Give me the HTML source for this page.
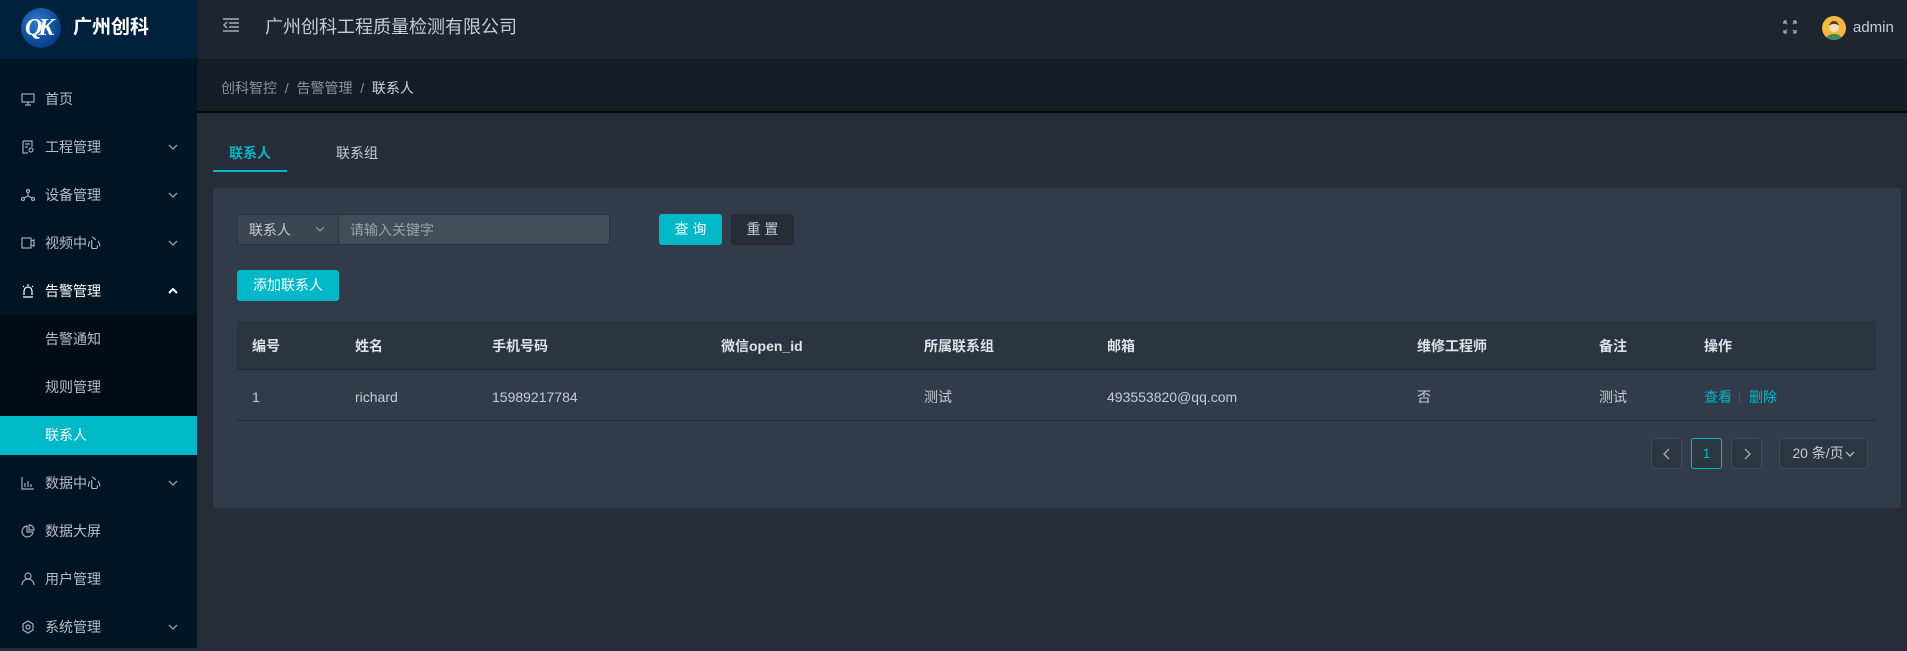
<!DOCTYPE html>
<html><head><meta charset="utf-8"><style>
*{margin:0;padding:0;box-sizing:border-box}
body{width:1907px;height:648px;overflow:hidden;background:#262d38;font-family:"Liberation Sans","Noto Sans CJK SC",sans-serif;font-size:14px;line-height:20px;color:#c8ccd2;position:relative}
.a{position:absolute;line-height:20px}
.side{left:0;top:0;width:197px;height:648px;background:#001524}
.logo{left:0;top:0;width:197px;height:59px;background:#00203b}
.mi{position:absolute;left:0;width:197px;height:48px;line-height:48px;color:#b8bec6;font-size:14px}
.mi .t{position:absolute;left:45px}
.mi svg.i{position:absolute;left:21px;top:17px}
.mi svg.ar{position:absolute;left:168px;top:21px}
.hdr{left:197px;top:0;width:1710px;height:59px;background:#1f252e}
.bc{left:197px;top:59px;width:1710px;height:54px;background:#181d25;border-bottom:2px solid #06090c}
.card{left:213px;top:188px;width:1688px;height:320px;background:#313b49;border-radius:3px}
.th{font-weight:bold;color:#dfe2e6}
.btn{position:absolute;border-radius:3px;text-align:center;font-size:14px}
.pg{position:absolute;top:438px;height:31px;border:1px solid #404a58;border-radius:3px;text-align:center;line-height:29px;color:#aab;background:#2c3542}
</style></head><body>
<div class="a side"></div>
<div class="a logo">
 <div class="a" style="left:21px;top:8px;width:40px;height:40px;border-radius:50%;background:radial-gradient(circle at 40% 35%,#2a7fd0,#0a3f86 70%,#082d60)"></div>
 <div class="a" style="left:25px;top:15px;color:#fff;font:italic bold 24px 'Liberation Serif',serif;letter-spacing:-4px;line-height:26px">QK</div>
 <div class="a" style="left:73px;top:16px;color:#fff;font-size:19px;font-weight:bold;line-height:24px">广州创科</div>
</div>
<div class="mi" style="top:75px"><svg class="i" width="14" height="14" viewBox="0 0 14 14" fill="none" stroke="#aab" stroke-width="1.2"><rect x="1" y="2" width="12" height="8"/><path d="M7 10v3M4 13h6"/></svg><span class="t">首页</span></div>
<div class="mi" style="top:123px"><svg class="i" width="14" height="14" viewBox="0 0 14 14" fill="none" stroke="#aab" stroke-width="1.2"><path d="M2 1h9v6M2 1v12h5M4 4h5M4 7h3"/><circle cx="10" cy="10" r="2"/></svg><span class="t">工程管理</span><svg class="ar" width="10" height="6" viewBox="0 0 10 6" fill="none" stroke="#8a929c" stroke-width="1.5"><path d="M1 1l4 4 4-4"/></svg></div>
<div class="mi" style="top:171px"><svg class="i" width="14" height="14" viewBox="0 0 14 14" fill="none" stroke="#aab" stroke-width="1.2"><circle cx="7" cy="3" r="1.5"/><circle cx="2" cy="11" r="1.5"/><circle cx="12" cy="11" r="1.5"/><path d="M7 5v3l-4 2M7 8l4 2"/></svg><span class="t">设备管理</span><svg class="ar" width="10" height="6" viewBox="0 0 10 6" fill="none" stroke="#8a929c" stroke-width="1.5"><path d="M1 1l4 4 4-4"/></svg></div>
<div class="mi" style="top:219px"><svg class="i" width="14" height="14" viewBox="0 0 14 14" fill="none" stroke="#aab" stroke-width="1.2"><rect x="1" y="2" width="9" height="10"/><path d="M10 5l3-1v6l-3-1"/></svg><span class="t">视频中心</span><svg class="ar" width="10" height="6" viewBox="0 0 10 6" fill="none" stroke="#8a929c" stroke-width="1.5"><path d="M1 1l4 4 4-4"/></svg></div>
<div class="mi" style="top:267px;color:#fff"><svg class="i" width="14" height="14" viewBox="0 0 14 14" fill="none" stroke="#fff" stroke-width="1.2"><path d="M3 11V7a4 4 0 0 1 8 0v4M2 13h10M7 0v2M2 2l1 1M12 2l-1 1"/></svg><span class="t">告警管理</span><svg class="ar" width="10" height="6" viewBox="0 0 10 6" fill="none" stroke="#fff" stroke-width="2"><path d="M1 5l4-4 4 4"/></svg></div>
<div class="a" style="left:0;top:315px;width:197px;height:101px;background:#000d17"></div>
<div class="mi" style="top:315px"><span class="t">告警通知</span></div>
<div class="mi" style="top:363px"><span class="t">规则管理</span></div>
<div class="mi" style="top:416px;height:39px;line-height:39px;background:#00b8c8;color:#fff"><span class="t">联系人</span></div>
<div class="mi" style="top:459px"><svg class="i" width="14" height="14" viewBox="0 0 14 14" fill="none" stroke="#aab" stroke-width="1.2"><path d="M1 1v12h12M4 11V7M7 11V5M10 11V8"/></svg><span class="t">数据中心</span><svg class="ar" width="10" height="6" viewBox="0 0 10 6" fill="none" stroke="#8a929c" stroke-width="1.5"><path d="M1 1l4 4 4-4"/></svg></div>
<div class="mi" style="top:507px"><svg class="i" width="14" height="14" viewBox="0 0 14 14" fill="none" stroke="#aab" stroke-width="1.2"><path d="M6 2a5.5 5.5 0 1 0 6 6H6z"/><path d="M8 1a5 5 0 0 1 5 5H8z"/></svg><span class="t">数据大屏</span></div>
<div class="mi" style="top:555px"><svg class="i" width="14" height="14" viewBox="0 0 14 14" fill="none" stroke="#aab" stroke-width="1.2"><circle cx="7" cy="4" r="3"/><path d="M1 13a6 6 0 0 1 12 0"/></svg><span class="t">用户管理</span></div>
<div class="mi" style="top:603px"><svg class="i" width="14" height="14" viewBox="0 0 14 14" fill="none" stroke="#aab" stroke-width="1.2"><path d="M7 1l5 3v6l-5 3-5-3V4z"/><circle cx="7" cy="7" r="2"/></svg><span class="t">系统管理</span><svg class="ar" width="10" height="6" viewBox="0 0 10 6" fill="none" stroke="#8a929c" stroke-width="1.5"><path d="M1 1l4 4 4-4"/></svg></div>

<div class="a hdr"></div>
<svg class="a" style="left:222px;top:17px" width="18" height="16" viewBox="0 0 18 16" fill="none" stroke="#aab" stroke-width="1.5"><path d="M1 2h16M7 6h10M7 10h10M1 14h16M5 5L2 8l3 3"/></svg>
<div class="a" style="left:265px;top:15px;font-size:18px;line-height:24px;color:#c8ccd2">广州创科工程质量检测有限公司</div>
<svg class="a" style="left:1783px;top:20px" width="14" height="14" viewBox="0 0 14 14" fill="none" stroke="#aab" stroke-width="1.3"><path d="M1 1l3 3M1 1v3M1 1h3M13 1l-3 3M13 1v3M13 1h-3M1 13l3-3M1 13v-3M1 13h3M13 13l-3-3M13 13v-3M13 13h-3"/></svg>
<div class="a" style="left:1822px;top:16px;width:24px;height:24px;border-radius:50%;background:#f2b840;overflow:hidden"><div class="a" style="left:7px;top:5px;width:10px;height:11px;border-radius:50%;background:#f6dcb8;border-top:3px solid #5a3a20"></div><div class="a" style="left:3px;top:18px;width:18px;height:8px;background:#3f8a5a;border-radius:8px 8px 0 0"></div></div>
<div class="a" style="left:1853px;top:18px;font-size:15px;color:#c8ccd2">admin</div>

<div class="a bc"></div>
<div class="a" style="left:221px;top:78px;font-size:14px;color:#8a929c">创科智控 &nbsp;/&nbsp; 告警管理 &nbsp;/&nbsp; <span style="color:#d0d4da">联系人</span></div>

<div class="a" style="left:229px;top:143px;color:#00b8c8;font-size:14px;font-weight:bold">联系人</div>
<div class="a" style="left:336px;top:143px;color:#c8ccd2;font-size:14px">联系组</div>
<div class="a" style="left:213px;top:170px;width:74px;height:2px;background:#00b8c8"></div>

<div class="a card"></div>
<div class="a" style="left:237px;top:214px;width:373px;height:31px;border:1px solid #2a323d;border-radius:3px;background:#434d5a"></div>
<div class="a" style="left:237px;top:214px;width:102px;height:31px;border:1px solid #2a323d;border-radius:3px 0 0 3px;background:#3b4451"></div>
<div class="a" style="left:249px;top:220px;color:#c8ccd2">联系人</div>
<svg class="a" style="left:315px;top:226px" width="10" height="6" viewBox="0 0 10 6" fill="none" stroke="#99a" stroke-width="1.2"><path d="M1 1l4 4 4-4"/></svg>
<div class="a" style="left:350px;top:220px;color:#9aa1ab">请输入关键字</div>
<div class="btn" style="left:659px;top:214px;width:63px;height:31px;line-height:31px;background:#00b8c8;color:#fff">查 询</div>
<div class="btn" style="left:731px;top:214px;width:63px;height:31px;line-height:31px;background:#262d38;color:#c8ccd2">重 置</div>
<div class="btn" style="left:237px;top:270px;width:102px;height:31px;line-height:31px;background:#00b8c8;color:#fff">添加联系人</div>

<div class="a" style="left:237px;top:321px;width:1639px;height:49px;background:#2b3441;border-radius:3px 3px 0 0;border-bottom:1px solid #232a34"></div>
<div class="a" style="left:237px;top:420px;width:1639px;height:1px;background:#232a34"></div>
<div class="a th" style="left:252px;top:336px">编号</div>
<div class="a th" style="left:355px;top:336px">姓名</div>
<div class="a th" style="left:492px;top:336px">手机号码</div>
<div class="a th" style="left:721px;top:336px">微信open_id</div>
<div class="a th" style="left:924px;top:336px">所属联系组</div>
<div class="a th" style="left:1107px;top:336px">邮箱</div>
<div class="a th" style="left:1417px;top:336px">维修工程师</div>
<div class="a th" style="left:1599px;top:336px">备注</div>
<div class="a th" style="left:1704px;top:336px">操作</div>
<div class="a" style="left:252px;top:387px">1</div>
<div class="a" style="left:355px;top:387px">richard</div>
<div class="a" style="left:492px;top:387px">15989217784</div>
<div class="a" style="left:924px;top:387px">测试</div>
<div class="a" style="left:1107px;top:387px">493553820@qq.com</div>
<div class="a" style="left:1417px;top:387px">否</div>
<div class="a" style="left:1599px;top:387px">测试</div>
<div class="a" style="left:1704px;top:387px;color:#00b8c8">查看</div>
<div class="a" style="left:1739px;top:391px;width:1px;height:12px;background:#4a5461"></div>
<div class="a" style="left:1749px;top:387px;color:#00b8c8">删除</div>

<div class="pg" style="left:1651px;width:31px"><svg width="8" height="12" viewBox="0 0 8 12" fill="none" stroke="#aab" stroke-width="1.3" style="margin-top:9px"><path d="M6 1L1 6l5 5"/></svg></div>
<div class="pg" style="left:1691px;width:31px;border-color:#00b8c8;color:#00b8c8">1</div>
<div class="pg" style="left:1731px;width:31px"><svg width="8" height="12" viewBox="0 0 8 12" fill="none" stroke="#aab" stroke-width="1.3" style="margin-top:9px"><path d="M2 1l5 5-5 5"/></svg></div>
<div class="pg" style="left:1779px;width:89px;color:#c8ccd2">20 条/页<svg width="10" height="6" viewBox="0 0 10 6" fill="none" stroke="#c8ccd2" stroke-width="1.2" style="margin-left:1px;vertical-align:middle"><path d="M1 1l4 4 4-4"/></svg></div>
</body></html>
